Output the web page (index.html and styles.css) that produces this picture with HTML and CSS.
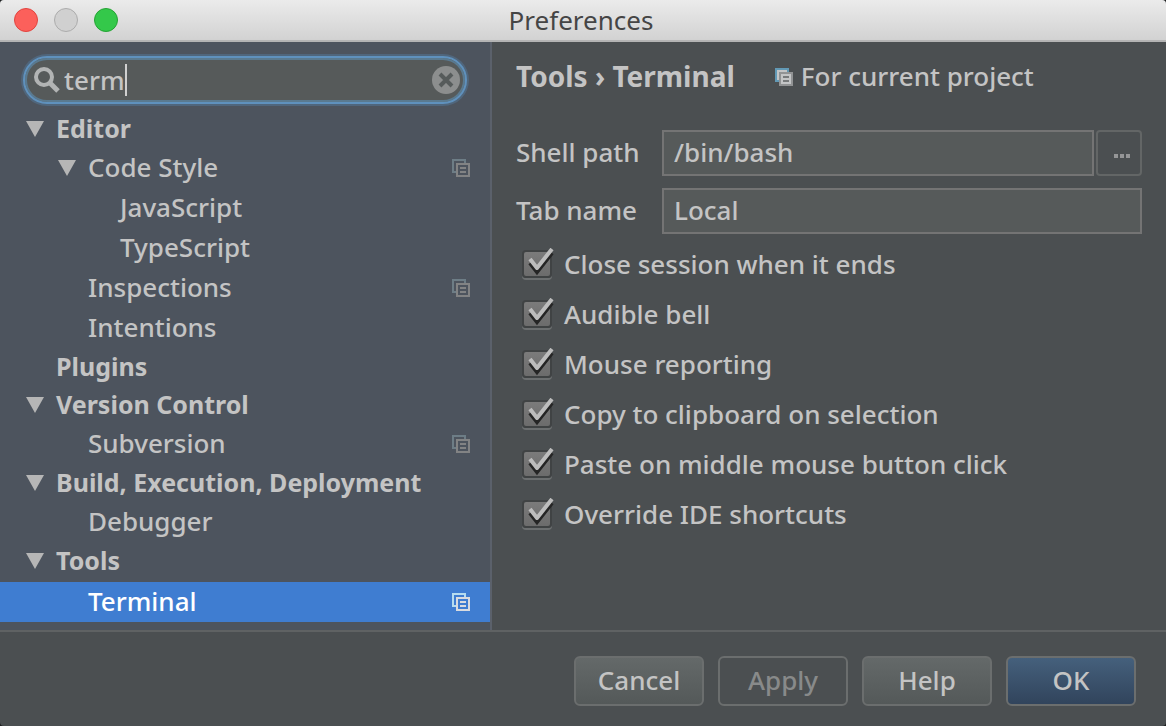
FILE: index.html
```html
<!DOCTYPE html>
<html lang="en">

<head>
  <meta charset="utf-8">
  <title>Preferences</title>
  <link rel="stylesheet" href="styles.css">
</head>

<body>

<svg class="sprite" aria-hidden="true">
  <symbol id="icon-arrow" viewBox="0 0 18 16">
    <path d="M0 0h18L9 16z" fill="currentColor"/>
  </symbol>
  <symbol id="icon-project" viewBox="0 0 18 18">
    <path class="sheet-back" d="M0 0h14v4h-2V2H2v10h2v2H0z"/>
    <path class="sheet-front" fill-rule="evenodd" d="M4 4h14v14H4zM6 6v10h10V6z"/>
    <path class="sheet-front" d="M8 8h6v2H8zM8 12h6v2H8z"/>
  </symbol>
  <symbol id="icon-check" viewBox="0 0 32 32">
    <path d="M8 15l7 9L30 5" fill="none" stroke="#252525" stroke-width="4"/>
    <path d="M8 11l7 9L30 1" fill="none" stroke="#bdbdbd" stroke-width="4" stroke-linejoin="round"/>
  </symbol>
</svg>

<div class="window">
  <header class="titlebar">
    <div class="window-buttons">
      <button class="dot dot-close" aria-label="Close"></button>
      <button class="dot dot-minimize" aria-label="Minimize" disabled></button>
      <button class="dot dot-zoom" aria-label="Zoom"></button>
    </div>
    <h1 class="window-title">Preferences</h1>
  </header>

  <div class="content">
    <aside class="sidebar">
      <div class="search">
        <label class="search-label" for="search" aria-label="Search">
          <svg class="search-icon" viewBox="0 0 26 26">
            <circle cx="10" cy="10" r="8" fill="none" stroke="#b2b4b4" stroke-width="4"/>
            <path d="M16 16l8 8" stroke="#b2b4b4" stroke-width="5"/>
          </svg>
        </label>
        <input class="search-input" id="search" type="text" value="term" size="4">
        <span class="caret"></span>
        <button class="search-clear" aria-label="Clear">
          <svg viewBox="0 0 28 28">
            <circle cx="14" cy="14" r="14" fill="#8c8e8e"/>
            <path d="M8 8l12 12M20 8L8 20" stroke="#565b5b" stroke-width="4"/>
          </svg>
        </button>
      </div>

      <ul class="tree">
        <li class="tree-row group"><svg class="arrow"><use href="#icon-arrow"/></svg>Editor</li>
        <li class="tree-row level-2"><svg class="arrow"><use href="#icon-arrow"/></svg>Code Style<svg class="project"><use href="#icon-project"/></svg></li>
        <li class="tree-row level-3">JavaScript</li>
        <li class="tree-row level-3">TypeScript</li>
        <li class="tree-row level-2 leaf">Inspections<svg class="project"><use href="#icon-project"/></svg></li>
        <li class="tree-row level-2 leaf">Intentions</li>
        <li class="tree-row group leaf">Plugins</li>
        <li class="tree-row group"><svg class="arrow"><use href="#icon-arrow"/></svg>Version Control</li>
        <li class="tree-row level-2 leaf">Subversion<svg class="project"><use href="#icon-project"/></svg></li>
        <li class="tree-row group"><svg class="arrow"><use href="#icon-arrow"/></svg>Build, Execution, Deployment</li>
        <li class="tree-row level-2 leaf">Debugger</li>
        <li class="tree-row group"><svg class="arrow"><use href="#icon-arrow"/></svg>Tools</li>
        <li class="tree-row level-2 leaf selected">Terminal<svg class="project"><use href="#icon-project"/></svg></li>
      </ul>
    </aside>

    <main class="settings">
      <div class="settings-header">
        <h2 class="breadcrumb">Tools › Terminal</h2>
        <span class="scope">
          <svg class="project" viewBox="0 0 18 18">
            <path d="M0 0h14v14H0z" fill="#6299b5"/>
            <path d="M2 2h10v10H2z" fill="#c3c5c6"/>
            <path d="M4 4h14v14H4z" fill="#919394"/>
            <path d="M6 6h10v10H6z" fill="#c3c5c6"/>
            <path d="M8 8h6v2H8zM8 12h6v2H8z" fill="#777a7b"/>
          </svg>
          For current project
        </span>
      </div>

      <form id="terminal-form">
        <div class="field">
          <label class="field-label" for="shell_path">Shell path</label>
          <input class="field-input" id="shell_path" type="text" value="/bin/bash">
          <button class="browse" type="button" aria-label="Browse">
            <svg viewBox="0 0 16 4"><path d="M0 0h4v4H0zM6 0h4v4H6zM12 0h4v4h-4z" fill="#959697"/></svg>
          </button>
        </div>
        <div class="field">
          <label class="field-label" for="tab_name">Tab name</label>
          <input class="field-input" id="tab_name" type="text" value="Local">
        </div>

        <div class="options">
          <label class="option"><span class="tick"><input type="checkbox" checked><svg><use href="#icon-check"/></svg></span>Close session when it ends</label>
          <label class="option"><span class="tick"><input type="checkbox" checked><svg><use href="#icon-check"/></svg></span>Audible bell</label>
          <label class="option"><span class="tick"><input type="checkbox" checked><svg><use href="#icon-check"/></svg></span>Mouse reporting</label>
          <label class="option"><span class="tick"><input type="checkbox" checked><svg><use href="#icon-check"/></svg></span>Copy to clipboard on selection</label>
          <label class="option"><span class="tick"><input type="checkbox" checked><svg><use href="#icon-check"/></svg></span>Paste on middle mouse button click</label>
          <label class="option"><span class="tick"><input type="checkbox" checked><svg><use href="#icon-check"/></svg></span>Override IDE shortcuts</label>
        </div>
      </form>
    </main>
  </div>

  <footer class="footer">
    <button class="button" type="button">Cancel</button>
    <button class="button" type="button" disabled>Apply</button>
    <button class="button" type="button">Help</button>
    <button class="button button-primary" type="submit" form="terminal-form">OK</button>
  </footer>
</div>

</body>

</html>
```
FILE: styles.css
```css
* {
  box-sizing: border-box;
}

body {
  margin: 0;
  background: #1c1e1f;
  color: #c4c4c4;
  font: 500 26px/40px "Noto Sans", sans-serif;
}

button, input {
  margin: 0;
  padding: 0;
  color: inherit;
  font: inherit;
}

.sprite {
  display: none;
}

.window {
  display: flex;
  flex-direction: column;
  min-height: 100vh;
  border-radius: 4px;
  background: #4b4f51;
  overflow: hidden;
}

/* title bar */

.titlebar {
  display: flex;
  align-items: center;
  height: 42px;
  padding: 0 14px;
  border-bottom: 2px solid #b4b4b4;
  background: linear-gradient(#ebebeb, #d2d2d2);
}

.window-buttons {
  display: flex;
  gap: 16px;
}

.dot {
  width: 24px;
  height: 24px;
  border: 1px solid #e2443f;
  border-radius: 50%;
  background: #fc605b;
}

.dot-minimize {
  border-color: #acacac;
  background: #d0d0d0;
}

.dot-zoom {
  border-color: #25a334;
  background: #34c84a;
}

.window-title {
  flex: 1;
  margin: 0;
  padding-right: 108px;
  color: #454545;
  font-size: 26px;
  font-weight: 400;
  text-align: center;
}

.content {
  display: flex;
  flex: 1;
}

/* sidebar */

.sidebar {
  flex: 0 0 492px;
  padding: 14px 0 8px;
  border-right: 2px solid #5b616b;
  background: #4d545e;
}

.search {
  display: flex;
  align-items: center;
  height: 48px;
  margin: 0 23px 6px;
  padding: 0 5px 0 9px;
  border: 2px solid #5f91bd;
  border-radius: 24px;
  background: #565a5a;
  box-shadow: 0 0 0 2px #50667c, inset 0 0 0 2px #5a7a90;
}

.search-label {
  display: flex;
}

.search-icon {
  width: 26px;
  height: 26px;
  margin-right: 4px;
}

.search-input {
  width: auto;
  border: 0;
  outline: 0;
  background: none;
  field-sizing: content;
}

.caret {
  width: 2px;
  height: 32px;
  background: #d0d0d0;
}

.search-clear {
  width: 28px;
  height: 28px;
  margin-left: auto;
  border: 0;
  background: none;
}

.search-clear svg {
  display: block;
}

.tree {
  margin: 0;
  padding: 0;
  list-style: none;
}

.tree-row {
  display: flex;
  align-items: center;
  height: 40px;
  padding: 0 20px 2px 26px;
}

.group {
  height: 38px;
  font-size: 25px;
  font-weight: 700;
}

.level-2 {
  padding-left: 58px;
}

.level-3 {
  padding-left: 120px;
}

.group.leaf {
  padding-left: 56px;
}

.level-2.leaf {
  padding-left: 88px;
}

.selected {
  height: 40px;
  margin-top: 2px;
  background: #3f7dd1;
  color: #fff;
  --sheet-back: #b5dcf0;
  --sheet-front: #d9dbdf;
}

.arrow {
  width: 18px;
  height: 16px;
  margin: 2px 12px 0 0;
  color: #b6b6b6;
}

.project {
  width: 18px;
  height: 18px;
  margin: 2px 0 0 auto;
}

.sheet-back {
  fill: var(--sheet-back, #6d7d86);
}

.sheet-front {
  fill: var(--sheet-front, #828384);
}

/* settings pane */

.settings {
  flex: 1;
  padding: 14px 24px;
}

.settings-header {
  display: flex;
  align-items: center;
  gap: 40px;
  margin-bottom: 34px;
}

.breadcrumb {
  margin: 0;
  font-size: 28px;
}

.scope {
  display: flex;
  align-items: center;
  gap: 8px;
}

.field {
  display: flex;
  gap: 2px;
  margin-bottom: 12px;
}

.field-label {
  flex: 0 0 144px;
  line-height: 44px;
}

.field-input {
  flex: 1;
  min-width: 0;
  height: 46px;
  padding: 0 10px 2px;
  border: 2px solid #747474;
  background: #565a5a;
}

.browse {
  display: flex;
  align-items: center;
  justify-content: center;
  width: 46px;
  height: 46px;
  padding: 6px 0 0 6px;
  border: 2px solid #636666;
  border-radius: 4px;
  background: none;
}

.browse svg {
  width: 16px;
  height: 4px;
}

.options {
  margin-top: -7px;
  padding-left: 6px;
}

.option {
  display: flex;
  align-items: center;
  gap: 10px;
  height: 50px;
}

.tick {
  display: grid;
  width: 32px;
  height: 32px;
}

.tick input,
.tick svg {
  grid-area: 1 / 1;
}

.tick input {
  width: 30px;
  height: 28px;
  margin-top: 2px;
  border: 2px solid #404344;
  border-radius: 4px;
  background: linear-gradient(#7b7b7b, #6c6c6c);
  box-shadow: 0 2px 0 #6c6f70;
  appearance: none;
}

.tick svg {
  width: 32px;
  height: 32px;
  overflow: visible;
  pointer-events: none;
}

.tick input:not(:checked) + svg {
  visibility: hidden;
}

/* bottom buttons */

.footer {
  display: flex;
  justify-content: flex-end;
  gap: 14px;
  padding: 24px 30px 20px;
  border-top: 2px solid #5f6263;
}

.button {
  width: 130px;
  height: 50px;
  padding-bottom: 2px;
  border: 2px solid #6b6e6e;
  border-radius: 6px;
  background: linear-gradient(#646969, #545959);
}

.button:disabled {
  background: none;
  color: #888a8a;
}

.button-primary {
  background: linear-gradient(#45607c, #31445c);
}
```
